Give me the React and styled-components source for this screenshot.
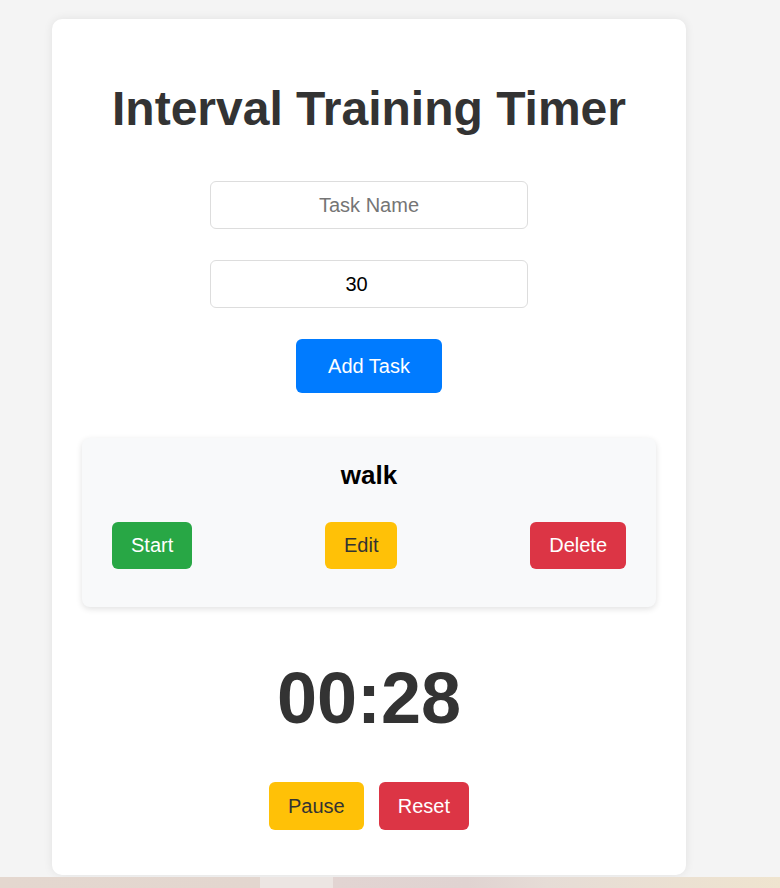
import React, { useState } from "react";
import styled, { createGlobalStyle } from "styled-components";

const GlobalStyle = createGlobalStyle`
  body {
    margin: 0;
    background: #f4f4f4;
    font-family: "Liberation Sans", Arial, sans-serif;
  }
`;

const Page = styled.div`
  display: flex;
  flex-direction: column;
  padding-top: 19px;
`;

const Card = styled.div`
  width: 634px;
  box-sizing: border-box;
  margin-left: 52px;
  padding: 30px;
  background: #fff;
  border-radius: 10px;
  box-shadow: 0 0 10px rgba(0, 0, 0, 0.08);
  display: flex;
  flex-direction: column;
  align-items: center;
`;

const Title = styled.h1`
  margin: 32px 0 45px;
  font-size: 48px;
  font-weight: bold;
  color: #333;
  text-align: center;
`;

const Form = styled.div`
  display: flex;
  flex-direction: column;
  align-items: center;
  gap: 31px;
`;

const Input = styled.input`
  width: 318px;
  height: 48px;
  box-sizing: border-box;
  padding: ${(p) => (p.type === "number" ? "0 22px 0 12px" : "0 12px")};
  border: 1px solid #ddd;
  border-radius: 6px;
  font-family: inherit;
  font-size: 20px;
  color: #000;
  text-align: center;
  outline: none;

  &::placeholder {
    color: #757575;
  }
`;

const colors = {
  blue: { bg: "#007bff", fg: "#fff" },
  green: { bg: "#28a745", fg: "#fff" },
  yellow: { bg: "#ffc107", fg: "#333" },
  red: { bg: "#dc3545", fg: "#fff" },
};

const Button = styled.button`
  border: none;
  border-radius: 6px;
  padding: ${(p) => (p.$big ? "15px 32px" : "12px 19px")};
  line-height: ${(p) => (p.$big ? "24px" : "23px")};
  font-family: inherit;
  font-size: 20px;
  background: ${(p) => colors[p.$tone].bg};
  color: ${(p) => colors[p.$tone].fg};
  cursor: pointer;
`;

const ControlButton = styled(Button)`
  line-height: 24px;
`;

const TaskCard = styled.div`
  align-self: stretch;
  margin-top: 45px;
  padding: 22px 30px 38px;
  background: #f8f9fa;
  border-radius: 8px;
  box-shadow: 0 2px 6px rgba(0, 0, 0, 0.12);
`;

const TaskName = styled.h3`
  margin: 0 0 31px;
  font-size: 26px;
  font-weight: bold;
  color: #000;
  text-align: center;
`;

const TaskActions = styled.div`
  display: flex;
  justify-content: space-between;
  align-items: center;
`;

const TimerDisplay = styled.div`
  margin: 50px 0 43px;
  font-size: 72px;
  font-weight: bold;
  color: #333;
`;

const Controls = styled.div`
  display: flex;
  gap: 15px;
  margin-bottom: 15px;
`;

const BottomStrip = styled.div`
  height: 14px;
  margin-top: 2px;
  background: linear-gradient(
    90deg,
    #e4d7cf 0%,
    #e3d6cf 33.3%,
    #ece5e2 33.3%,
    #ece5e2 42.7%,
    #e2d4d2 42.7%,
    #e0d3d1 60%,
    #e6dcd6 70%,
    #efe4cf 100%
  );
`;

export default function App() {
  const [name, setName] = useState("");
  const [seconds, setSeconds] = useState(30);

  return (
    <Page>
      <GlobalStyle />
      <Card>
        <Title>Interval Training Timer</Title>
        <Form>
          <Input
            placeholder="Task Name"
            value={name}
            onChange={(e) => setName(e.target.value)}
          />
          <Input
            type="number"
            value={seconds}
            onChange={(e) => setSeconds(e.target.value)}
          />
          <Button $tone="blue" $big>
            Add Task
          </Button>
        </Form>

        <TaskCard>
          <TaskName>walk</TaskName>
          <TaskActions>
            <Button $tone="green">Start</Button>
            <Button $tone="yellow">Edit</Button>
            <Button $tone="red">Delete</Button>
          </TaskActions>
        </TaskCard>

        <TimerDisplay>00:28</TimerDisplay>

        <Controls>
          <ControlButton $tone="yellow">Pause</ControlButton>
          <ControlButton $tone="red">Reset</ControlButton>
        </Controls>
      </Card>
      <BottomStrip />
    </Page>
  );
}
